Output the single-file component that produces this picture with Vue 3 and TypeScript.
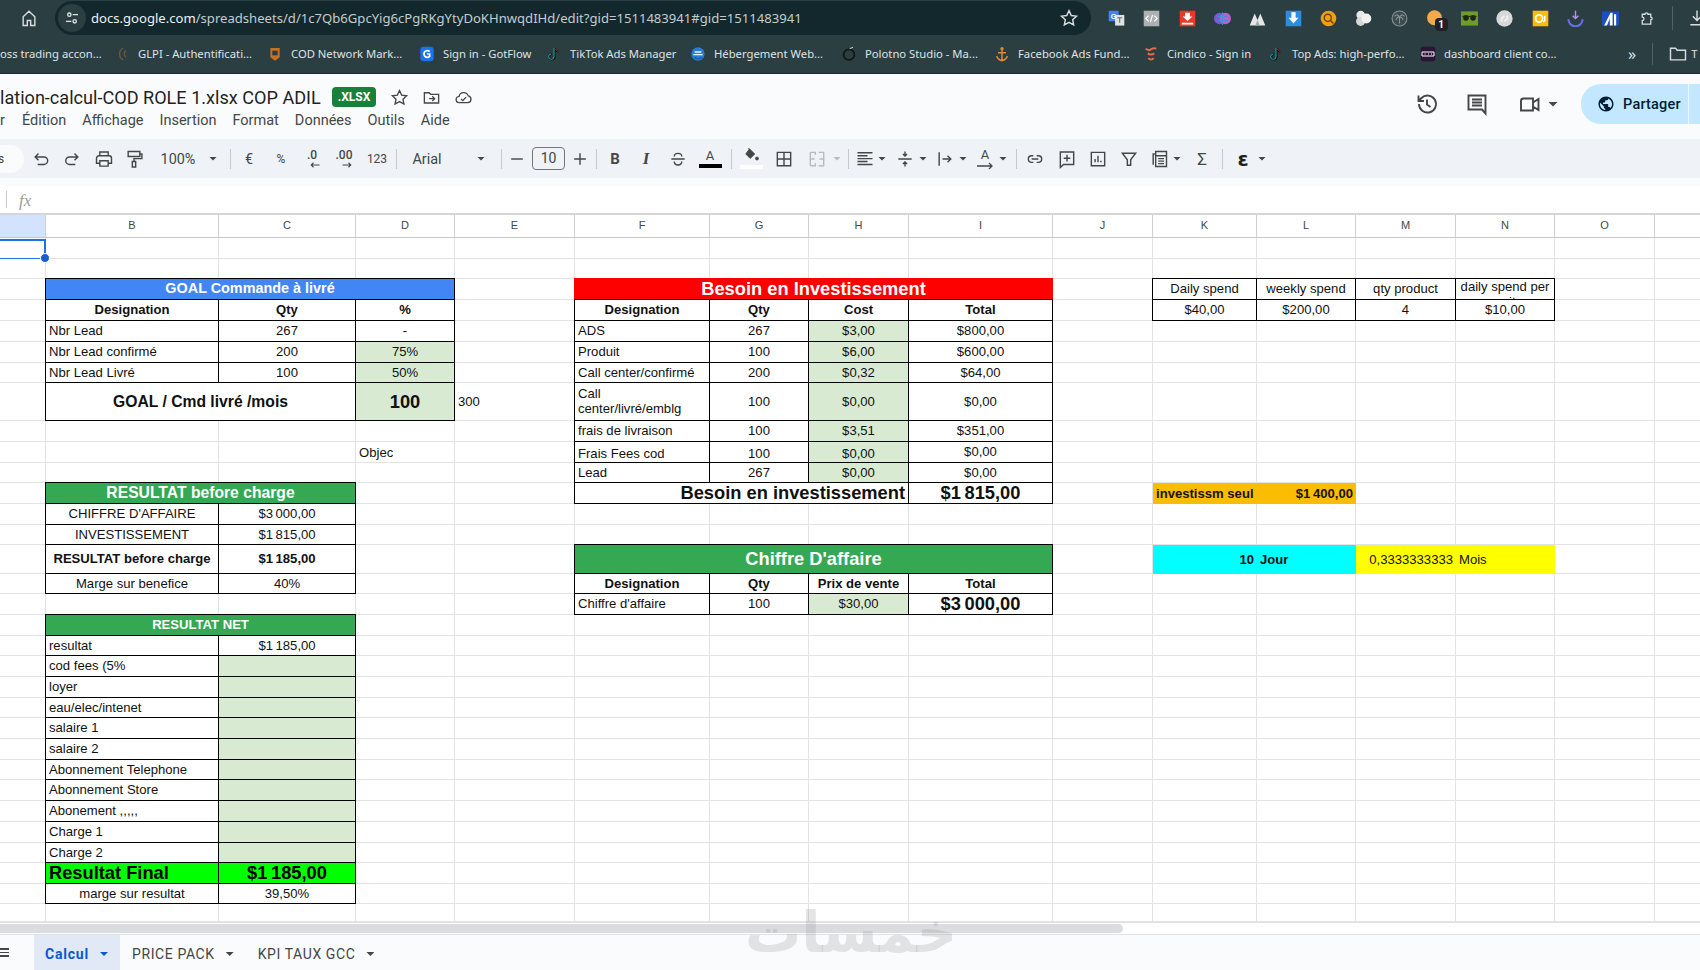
<script setup lang="ts">
import { computed } from "vue";

const colLabels = ["", "B", "C", "D", "E", "F", "G", "H", "I", "J", "K", "L", "M", "N", "O", ""];
const ROWS = 32;
const COLS = 16;

// stroke icons, 24 box
const icons: Record<string, string> = {
  home: "M5 21V10.500L12 4l7 6.500V21h-5v-6h-4v6z",
  star: "M12 3.200l2.700 5.800 6.300.8-4.600 4.300 1.200 6.200-5.600-3.100-5.600 3.100 1.200-6.200L3 9.800l6.300-.8z",
  move: "M3 6h6l2 2h10v11H3zM9 13.500h7M13 10.500l3 3-3 3",
  cloud: "M7 18.500a4 4 0 0 1-.6-8A6 6 0 0 1 18 10a4.300 4.300 0 0 1-.5 8.500zM9 14l2.200 2 4-4.500",
  history: "M4 12a8.500 8.500 0 1 0 2.500-6L3.500 9M3.500 3.500V9H9M12 7.500v5l3.500 2.500",
  comment: "M3.500 3.500h17v14h0v4l-3.500-4h-13.500zM7 7.500h10M7 10.500h10M7 13.500h10",
  video: "M3 9a2.500 2.500 0 0 1 2.500-2.500H15v12H3zM15 10.500l5.500-3.500v11l-5.500-3.500z",
  undo: "M9 5.500L5 9.500l4 4M5 9.500h10.500a4.500 4.500 0 0 1 0 9H8",
  redo: "M15 5.500l4 4-4 4M19 9.500H9a4.500 4.500 0 0 0 0 9h7",
  print: "M7 8V3.500h10V8M7 17H3v-6a3 3 0 0 1 3-3h12a3 3 0 0 1 3 3v6h-4M7 14h10v6.500H7z",
  paint: "M5 3h14v6H5zM19 6h2.500v5.500H12V15M10 15h4v6.500h-4z",
  minus: "M5 12h14",
  plus: "M12 5v14M5 12h14",
  strike: "M4 12h16M7.500 9c0-5 9-5 9 0M7.500 15c0 5.500 9 5.500 9 0",
  borders: "M4 4h16v16H4zM12 4v16M4 12h16",
  merge: "M4 4h6v3M4 20h6v-3M14 4h6v3M14 20h6v-3M4 4v16M20 4v16M3 12h6M21 12h-6",
  align: "M3 4.500h18M3 8h12M3 11.500h18M3 15h12M3 18.500h18",
  valign: "M4 12h16M12 3v5.500M9.500 6l2.500 2.500L14.500 6M12 21v-5.500M9.500 18l2.500-2.500 2.500 2.500",
  wrap: "M5 4v16M9 12h10M15 8l4 4-4 4",
  link: "M10 8H8a4 4 0 0 0 0 8h2M14 8h2a4 4 0 0 1 0 8h-2M8 12h8",
  addnote: "M4 3.500h16v15H8l-4 3.500zM12 7v8M8 11h8",
  chart: "M4 4h16v16H4zM8.500 16v-4M12 16V8M15.500 16v-2",
  filter: "M4 5h16l-6 8v6.500h-4V13z",
  funcs: "M5 19V6h2M8 3h13v18H8zM8 8h13M11 11.500h7M11 14.500h7M11 17.500h7",
};

const globe =
  "M12 2C6.480 2 2 6.480 2 12s4.480 10 10 10 10-4.480 10-10S17.520 2 12 2zm-1 17.930c-3.950-.490-7-3.850-7-7.930 0-.620.080-1.210.210-1.790L9 15v1c0 1.100.900 2 2 2v1.930zm6.900-2.540c-.260-.810-1-1.390-1.900-1.390h-1v-3c0-.550-.450-1-1-1H8v-2h2c.550 0 1-.450 1-1V7h2c1.100 0 2-.900 2-2v-.410c2.930 1.190 5 4.060 5 7.410 0 2.080-.800 3.970-2.100 5.390z";

// extension toolbar of the browser
const extensions: string[] = [
  '<rect x="1" y="1" width="14" height="15" rx="1" fill="#4285f4"/><rect x="10" y="7" width="13" height="15" fill="#dfe3e6"/><text x="4" y="12" font-size="10" font-weight="700" fill="#fff" font-family="Liberation Sans">G</text><path d="M13 11h7M16.500 11v7" stroke="#667" stroke-width="1.500"/>',
  '<rect x="1" y="1" width="22" height="22" fill="#aeb1b2"/><path d="M8 8l-4 4 4 4M16 8l4 4-4 4M13.500 7l-3 10" stroke="#fff" stroke-width="1.600" fill="none"/>',
  '<rect x="1" y="1" width="22" height="22" fill="#ea3a24"/><path d="M8.500 4h7v5H19l-7 6.500L5 9h3.500zM4 18h16v2.500H4z" fill="#fff"/>',
  '<circle cx="8" cy="12" r="8" fill="#7a58d8"/><circle cx="16" cy="12" r="8" fill="#c05ed0"/><path d="M12 3v18M5 9h5M5 15h5M14 9h5M14 15h5" stroke="#3c8fd8" stroke-width="1.500"/>',
  '<path d="M1 22L8 5l4 9 4-9 7 17z" fill="#e6e6e6"/><path d="M12 14l-3 8h6z" fill="#9aa"/>',
  '<rect x="1" y="1" width="22" height="22" fill="#2a8de0"/><path d="M9 3h6v8h4l-7 8-7-8h4z" fill="#fff"/>',
  '<circle cx="12" cy="12" r="11" fill="#f59e0b"/><circle cx="11" cy="11" r="5" fill="none" stroke="#6b4300" stroke-width="2"/><path d="M15 15l4 4" stroke="#6b4300" stroke-width="2"/>',
  '<circle cx="8" cy="7" r="6" fill="#e8e8e8"/><circle cx="8" cy="16" r="6.500" fill="#d8d8d8"/><circle cx="16" cy="12" r="7" fill="#f2f2f2"/>',
  '<circle cx="12" cy="12" r="10.500" fill="#3c4d50" stroke="#8a9194" stroke-width="1.500"/><path d="M12 10v9M5 9c3-3 5-2 7 1 2-3 4-4 7-1M7 14c1-3 3-4 5-4 2 0 4 1 5 4" stroke="#8a9194" stroke-width="1.500" fill="none"/>',
  '<circle cx="12" cy="11" r="10.500" fill="#f5a94a"/>',
  '<rect x="0" y="2" width="24" height="20" fill="#6f9b2d"/><circle cx="7" cy="11" r="4" fill="#1c2a12"/><circle cx="17" cy="11" r="4" fill="#1c2a12"/><path d="M2 9h20" stroke="#1c2a12" stroke-width="1.500"/>',
  '<circle cx="12" cy="12" r="11.500" fill="#d8d8d8"/><path d="M9 16a3 3 0 0 1 0-5l3-3M15 8a3 3 0 0 1 0 5l-3 3" stroke="#f4f4f4" stroke-width="2.500" fill="none"/>',
  '<rect x="1" y="1" width="22" height="22" fill="#fbbc04"/><circle cx="10" cy="12" r="5" fill="none" stroke="#fff" stroke-width="2.500"/><path d="M18 8v7l-2 2" stroke="#fff" stroke-width="2" fill="none"/>',
  '<path d="M2 13a10 10 0 0 0 20 0" fill="none" stroke="#6a6cf0" stroke-width="3"/><path d="M12 1v10M8 8l4 4 4-4" stroke="#b494f0" stroke-width="2" fill="none"/>',
  '<rect x="0" y="2" width="24" height="20" fill="#1b4fc0"/><path d="M3 22L12 4l3 0v18h-4V12l-4 10zM17 6h3v16h-3z" fill="#fff"/>',
  '<path d="M6 6h4a2 2 0 0 1 4 0h4v4a2 2 0 0 1 0 4v6H6v-5a2.500 2.500 0 0 0 0-5z" fill="none" stroke="#d8dddf" stroke-width="1.800"/>',
];

// bookmarks bar, w is the slot each entry takes
const bookmarks = [
  { w: 114, label: "oss trading accon...", icon: "" },
  { w: 153, label: "GLPI - Authentificati...", icon: '<path d="M14 3a10 10 0 0 0 0 18M18 7a6 6 0 0 0 0 10" stroke="#6a5a3a" stroke-width="2" fill="none"/>' },
  { w: 152, label: "COD Network Mark...", icon: '<path d="M5 3h14v14l-7 5-7-5z" fill="#c8711f"/><rect x="8" y="7" width="8" height="7" fill="#2b3e42"/>' },
  { w: 127, label: "Sign in - GotFlow", icon: '<rect x="2" y="1" width="20" height="22" rx="5" fill="#1a73f0"/><path d="M16 8.500a5 5 0 1 0 0 7V12h-4" stroke="#fff" stroke-width="2.500" fill="none"/>' },
  { w: 144, label: "TikTok Ads Manager", icon: '<path d="M13 3v13a4 4 0 1 1-4-4M13 3c1 4 3 5 6 5.500" stroke="#111" stroke-width="3" fill="none"/><path d="M12 3v13a4 4 0 1 1-4-4" stroke="#25f4ee" stroke-width="1" fill="none"/><path d="M14 4c1 3 3 4 5 4.500" stroke="#fe2c55" stroke-width="1" fill="none"/>' },
  { w: 151, label: "Hébergement Web...", icon: '<circle cx="12" cy="12" r="10" fill="#2a7ad8"/><path d="M5 13h14M7 9h10" stroke="#dff" stroke-width="2"/><path d="M18 17a8 8 0 0 1-11 0" stroke="#1b5aa8" stroke-width="2" fill="none"/>' },
  { w: 153, label: "Polotno Studio - Ma...", icon: '<circle cx="12" cy="13" r="8" fill="none" stroke="#0e1516" stroke-width="2.500"/><path d="M13 4l5-2" stroke="#d8dddf" stroke-width="1.500"/>' },
  { w: 149, label: "Facebook Ads Fund...", icon: '<circle cx="12" cy="4" r="2.500" fill="#e08a2c"/><path d="M12 6v16M6 10h12M4 15c1 4 4 6 8 7 4-1 7-3 8-7" stroke="#e08a2c" stroke-width="2.200" fill="none"/>' },
  { w: 125, label: "Cindico - Sign in", icon: '<path d="M4 4c3 3 5 3 8 1s5-2 8-1M7 11c3 2 7 2 10 0M8 18c2 3 6 3 8 0" stroke="#e8694a" stroke-width="3" fill="none"/>' },
  { w: 152, label: "Top Ads: high-perfo...", icon: '<path d="M13 3v13a4 4 0 1 1-4-4M13 3c1 4 3 5 6 5.500" stroke="#111" stroke-width="3" fill="none"/><path d="M12 3v13a4 4 0 1 1-4-4" stroke="#25f4ee" stroke-width="1" fill="none"/><path d="M14 4c1 3 3 4 5 4.500" stroke="#fe2c55" stroke-width="1" fill="none"/>' },
  { w: 200, label: "dashboard client co...", icon: '<rect x="1" y="1" width="22" height="22" rx="3" fill="#2c1338"/><path d="M3 9h18v6H3z" fill="none" stroke="#fff" stroke-width="1.500"/><path d="M7 12h1M12 12h1M17 12h1" stroke="#fff" stroke-width="2.500"/>' },
];

const menus = ["r", "Édition", "Affichage", "Insertion", "Format", "Données", "Outils", "Aide"];

type Tool = {
  kind: "pill" | "icon" | "caret" | "sep" | "text" | "box" | "dec" | "colorA" | "fill" | "rotA";
  cx: number;
  w: number;
  icon?: string;
  label?: string;
  cls?: string;
  dir?: "l" | "r";
};

const ic = (icon: string, cx: number, cls = ""): Tool => ({ kind: "icon", icon, cx, w: 20, cls });
const caret = (cx: number, cls = ""): Tool => ({ kind: "caret", cx, w: 8, cls });
const sep = (cx: number): Tool => ({ kind: "sep", cx, w: 1 });
const tx = (label: string, cx: number, w: number, cls = ""): Tool => ({ kind: "text", label, cx, w, cls });

const toolList: Tool[] = [
  { kind: "pill", cx: 12, w: 24, label: "s" },
  ic("undo", 41), ic("redo", 72), ic("print", 104), ic("paint", 134),
  tx("100%", 178, 38), caret(213), sep(230),
  tx("€", 249, 14), tx("%", 281, 14, "small"),
  { kind: "dec", cx: 312, w: 20, label: ".0", dir: "l" },
  { kind: "dec", cx: 344, w: 22, label: ".00", dir: "r" },
  tx("123", 377, 24, "small"), sep(396),
  tx("Arial", 427, 32), caret(481), sep(501),
  ic("minus", 517),
  { kind: "box", cx: 548.500, w: 33, label: "10" },
  ic("plus", 580), sep(596),
  tx("B", 615, 14, "bold"), tx("I", 646, 14, "ital"),
  ic("strike", 678),
  { kind: "colorA", cx: 710, w: 23, label: "A" },
  sep(731),
  { kind: "fill", cx: 751, w: 23 },
  ic("borders", 784), ic("merge", 817, "dim"), caret(837, "dim"), sep(848),
  ic("align", 865), caret(882), ic("valign", 905), caret(923),
  ic("wrap", 945), caret(963),
  { kind: "rotA", cx: 985, w: 18, label: "A" },
  caret(1003), sep(1016),
  ic("link", 1035), ic("addnote", 1067), ic("chart", 1098), ic("filter", 1129),
  ic("funcs", 1159), caret(1177),
  tx("Σ", 1202, 14, "sigma"), sep(1222),
  tx("ε", 1243, 14, "eps"), caret(1262),
];

// flex margins worked out from where each tool's centre should land
const tools = computed(() => {
  let end = 0;
  return toolList.map((t) => {
    const gap = t.cx - t.w / 2 - end;
    end = t.cx + t.w / 2;
    return { ...t, style: { width: `${t.w}px`, marginLeft: `${gap}px` } };
  });
});

type Cell = { r: number; c: number; text?: string; cls: string; rs?: number; cs?: number };
const N = "\u202f";
const cell = (r: number, c: number, text: string, cls = "", cs = 1): Cell => ({ r, c, text, cls, cs });

const B = 1, C = 2, D = 3, E = 4, F = 5, G = 6, H = 7, I = 8, K = 10, L = 11, M = 12, O = 13;

const cells: Cell[] = [
  // goal
  cell(2, B, "GOAL Commande à livré", "bd mid head blue", 3),
  cell(3, B, "Designation", "bd mid bold"), cell(3, C, "Qty", "bd mid bold"), cell(3, D, "%", "bd mid bold"),
  cell(4, B, "Nbr Lead", "bd"), cell(4, C, "267", "bd mid"), cell(4, D, "-", "bd mid"),
  cell(5, B, "Nbr Lead confirmé", "bd"), cell(5, C, "200", "bd mid"), cell(5, D, "75%", "bd mid input"),
  cell(6, B, "Nbr Lead Livré", "bd"), cell(6, C, "100", "bd mid"), cell(6, D, "50%", "bd mid input"),
  cell(7, B, "GOAL / Cmd livré /mois", "bd mid bold f12", 2), cell(7, D, "100", "bd mid input bold f14"),
  cell(7, E, "300"),
  cell(9, D, "Objec"),
  // resultat before charge
  cell(11, B, "RESULTAT before charge", "bd mid head green f12", 2),
  cell(12, B, "CHIFFRE D'AFFAIRE", "bd mid"), cell(12, C, `$3${N}000,00`, "bd mid"),
  cell(13, B, "INVESTISSEMENT", "bd mid"), cell(13, C, `$1${N}815,00`, "bd mid"),
  cell(14, B, "RESULTAT before charge", "bd mid bold"), cell(14, C, `$1${N}185,00`, "bd mid bold"),
  cell(15, B, "Marge sur benefice", "bd mid"), cell(15, C, "40%", "bd mid"),
  // resultat net
  cell(17, B, "RESULTAT NET", "bd mid head green f10", 2),
  cell(18, B, "resultat", "bd"), cell(18, C, `$1${N}185,00`, "bd mid"),
  ...["cod fees (5%", "loyer", "eau/elec/intenet", "salaire 1", "salaire 2", "Abonnement Telephone", "Abonnement Store", "Abonement ,,,,,", "Charge 1", "Charge 2"].flatMap((t, i) => [
    cell(19 + i, B, t, "bd"),
    cell(19 + i, C, "", "bd input"),
  ]),
  cell(29, B, "Resultat Final", "bd lime bold f14"), cell(29, C, `$1${N}185,00`, "bd mid lime bold f14"),
  cell(30, B, "marge sur resultat", "bd mid"), cell(30, C, "39,50%", "bd mid"),
  // besoin
  cell(2, F, "Besoin en Investissement", "bd mid head red f14", 4),
  cell(3, F, "Designation", "bd mid bold"), cell(3, G, "Qty", "bd mid bold"), cell(3, H, "Cost", "bd mid bold"), cell(3, I, "Total", "bd mid bold"),
  cell(4, F, "ADS", "bd"), cell(4, G, "267", "bd mid"), cell(4, H, "$3,00", "bd mid input"), cell(4, I, "$800,00", "bd mid"),
  cell(5, F, "Produit", "bd"), cell(5, G, "100", "bd mid"), cell(5, H, "$6,00", "bd mid input"), cell(5, I, "$600,00", "bd mid"),
  cell(6, F, "Call center/confirmé", "bd"), cell(6, G, "200", "bd mid"), cell(6, H, "$0,32", "bd mid input"), cell(6, I, "$64,00", "bd mid"),
  cell(7, F, "Call center/livré/emblg", "bd wrap"), cell(7, G, "100", "bd mid"), cell(7, H, "$0,00", "bd mid input"), cell(7, I, "$0,00", "bd mid"),
  cell(8, F, "frais de livraison", "bd"), cell(8, G, "100", "bd mid"), cell(8, H, "$3,51", "bd mid input"), cell(8, I, "$351,00", "bd mid"),
  cell(9, F, "Frais Fees cod", "bd low"), cell(9, G, "100", "bd mid low"), cell(9, H, "$0,00", "bd mid input low"), cell(9, I, "$0,00", "bd mid"),
  cell(10, F, "Lead", "bd"), cell(10, G, "267", "bd mid"), cell(10, H, "$0,00", "bd mid input"), cell(10, I, "$0,00", "bd mid"),
  cell(11, F, "Besoin en investissement", "bd end bold f14", 3), cell(11, I, `$1${N}815,00`, "bd mid bold f14"),
  // chiffre d'affaire
  cell(14, F, "Chiffre D'affaire", "bd mid head green f14", 4),
  cell(15, F, "Designation", "bd mid bold"), cell(15, G, "Qty", "bd mid bold"), cell(15, H, "Prix de vente", "bd mid bold"), cell(15, I, "Total", "bd mid bold"),
  cell(16, F, "Chiffre d'affaire", "bd"), cell(16, G, "100", "bd mid"), cell(16, H, "$30,00", "bd mid input"), cell(16, I, `$3${N}000,00`, "bd mid bold f14"),
  // daily spend
  cell(2, K, "Daily spend", "bd mid"), cell(2, L, "weekly spend", "bd mid"), cell(2, M, "qty product", "bd mid"), cell(2, O, "daily spend per unit", "bd mid clip"),
  cell(3, K, "$40,00", "bd mid"), cell(3, L, "$200,00", "bd mid"), cell(3, M, "4", "bd mid"), cell(3, O, "$10,00", "bd mid"),
  // side notes
  cell(11, K, "investissm seul", "orange bold"), cell(11, L, `$1${N}400,00`, "orange bold end"),
  cell(14, K, "10", "cyan bold end"), cell(14, L, "Jour", "cyan bold"),
  cell(14, M, "0,3333333333", "yellow end"), cell(14, O, "Mois", "yellow"),
];

const area = (c: Cell) => ({
  gridArea: `${c.r + 1} / ${c.c + 1} / span 1 / span ${c.cs ?? 1}`,
});
const blanks = computed(() => {
  const list: { r: number; c: number }[] = [];
  for (let r = 0; r < ROWS; r++) for (let c = 0; c < COLS; c++) list.push({ r, c });
  return list;
});

const tabs = [
  { label: "Calcul", active: true },
  { label: "PRICE PACK", active: false },
  { label: "KPI TAUX GCC", active: false },
];
</script>

<template>
  <div class="page">
    <!-- browser chrome -->
    <div class="browser">
      <div class="nav-row">
        <div class="home-slot">
          <svg class="ico light" viewBox="0 0 24 24"><path :d="icons.home" /></svg>
        </div>
        <div class="omnibox">
          <span class="tune">
            <svg viewBox="0 0 24 24">
              <circle cx="8" cy="7" r="2.500" /><path d="M13 7h8M3 17h8" /><circle cx="16" cy="17" r="2.500" />
            </svg>
          </span>
          <span class="url"><b>docs.google.com</b>/spreadsheets/d/1c7Qb6GpcYig6cPgRKgYtyDoKHnwqdIHd/edit?gid=1511483941#gid=1511483941</span>
          <svg class="ico light bm-star" viewBox="0 0 24 24"><path :d="icons.star" /></svg>
        </div>
        <div class="exts">
          <div v-for="(e, i) in extensions" :key="i" class="ext">
            <svg viewBox="0 0 24 24" v-html="e"></svg>
            <span v-if="i === 9" class="ext-badge">1</span>
          </div>
          <span class="ext-sep"></span>
          <svg class="ico light ext-dl" viewBox="0 0 24 24"><path d="M12 3v12M7 10l5 5 5-5M4 20h16" /></svg>
        </div>
      </div>
      <div class="bookmarks">
        <div v-for="b in bookmarks" :key="b.label" class="bookmark" :style="{ width: b.w + 'px' }">
          <svg v-if="b.icon" viewBox="0 0 24 24" v-html="b.icon"></svg>
          <span>{{ b.label }}</span>
        </div>
        <div class="bm-end">
          <span class="more">»</span>
          <span class="bm-sep"></span>
          <svg class="ico light" viewBox="0 0 24 24"><path d="M3 5h6l2 2.500h10V19H3z" /></svg>
          <span class="bm-t">T</span>
        </div>
      </div>
    </div>

    <!-- docs header -->
    <header class="docs-head">
      <div class="docs-left">
        <div class="title-row">
          <span class="doc-title">lation-calcul-COD ROLE 1.xlsx COP ADIL</span>
          <span class="xlsx">.XLSX</span>
          <svg class="ico title-ico" viewBox="0 0 24 24"><path :d="icons.star" /></svg>
          <svg class="ico title-ico" viewBox="0 0 24 24"><path :d="icons.move" /></svg>
          <svg class="ico title-ico" viewBox="0 0 24 24"><path :d="icons.cloud" /></svg>
        </div>
        <nav class="menu">
          <span v-for="m in menus" :key="m">{{ m }}</span>
        </nav>
      </div>
      <div class="docs-right">
        <svg class="ico big" viewBox="0 0 24 24"><path :d="icons.history" /></svg>
        <svg class="ico big" viewBox="0 0 24 24"><path :d="icons.comment" /></svg>
        <svg class="ico big" viewBox="0 0 24 24"><path :d="icons.video" /></svg>
        <i class="caret"></i>
        <div class="share">
          <div class="share-main">
            <svg viewBox="0 0 24 24"><path :d="globe" /></svg>
            <span>Partager</span>
          </div>
          <div class="share-more"></div>
        </div>
      </div>
    </header>

    <!-- toolbar -->
    <div class="toolbar">
      <template v-for="(t, i) in tools" :key="i">
        <div v-if="t.kind === 'pill'" class="t-pill" :style="t.style">{{ t.label }}</div>
        <svg v-else-if="t.kind === 'icon'" class="ico tool" :class="t.cls" :style="t.style" viewBox="0 0 24 24"><path :d="icons[t.icon!]" /></svg>
        <i v-else-if="t.kind === 'caret'" class="caret small-caret" :class="t.cls" :style="t.style"></i>
        <span v-else-if="t.kind === 'sep'" class="t-sep" :style="t.style"></span>
        <span v-else-if="t.kind === 'text'" class="t-text" :class="t.cls" :style="t.style">{{ t.label }}</span>
        <span v-else-if="t.kind === 'box'" class="t-box" :style="t.style">{{ t.label }}</span>
        <span v-else-if="t.kind === 'dec'" class="t-dec" :style="t.style">
          <span>{{ t.label }}</span>
          <svg viewBox="0 0 16 8"><path :d="t.dir === 'l' ? 'M14 4H3M6 1L3 4l3 3' : 'M2 4h11M10 1l3 3-3 3'" /></svg>
        </span>
        <span v-else-if="t.kind === 'colorA'" class="t-color" :style="t.style">
          <span>{{ t.label }}</span><i class="bar black"></i>
        </span>
        <span v-else-if="t.kind === 'fill'" class="t-color" :style="t.style">
          <svg class="bucket" viewBox="0 0 24 20">
            <path d="M10 1l7 7-6 6-6-6zM10 1L8 0" />
            <circle cx="20" cy="14" r="2" />
          </svg>
          <i class="bar white"></i>
        </span>
        <span v-else class="t-color rot" :style="t.style">
          <span>{{ t.label }}</span>
          <svg viewBox="0 0 18 8"><path d="M1 4h15M13 1l3 3-3 3" /></svg>
        </span>
      </template>
    </div>

    <!-- formula bar -->
    <div class="formula">
      <span class="f-sep"></span>
      <span class="fx">fx</span>
    </div>

    <!-- sheet -->
    <div class="col-head">
      <div v-for="(l, i) in colLabels" :key="i" class="col-cell" :class="{ selected: i === 0 }">{{ l }}</div>
    </div>
    <div class="grid">
      <div
        v-for="b in blanks"
        :key="`${b.r}-${b.c}`"
        class="blank"
        :style="{ gridArea: `${b.r + 1} / ${b.c + 1}` }"
      ></div>
      <div class="active-cell"><i class="handle"></i></div>
      <div
        v-for="(c, i) in cells"
        :key="i"
        class="cell"
        :class="c.cls"
        :style="area(c)"
      >
        <span>{{ c.text }}</span>
      </div>
    </div>

    <div class="scroll-row"><div class="thumb"></div></div>

    <!-- sheet tabs -->
    <div class="tabs">
      <div class="all-sheets"><i></i><i></i><i></i></div>
      <div v-for="t in tabs" :key="t.label" class="tab" :class="{ active: t.active }">
        <span>{{ t.label }}</span>
        <i class="caret"></i>
      </div>
    </div>

    <div class="watermark">خمسات</div>
  </div>
</template>

<style>
html,
body {
  margin: 0;
  background: #fff;
  overflow: hidden;
}
</style>

<style scoped>
.page {
  --cols: 46px 173px 137px 99px 120px 135px 99px 100px 144px 100px 104px 99px 100px 99px 100px 46px;
  position: relative;
  width: 1700px;
  height: 970px;
  overflow: hidden;
  display: flex;
  flex-direction: column;
  font-family: Roboto, "Liberation Sans", sans-serif;
  color: #444746;
  background: #f9fbfd;
}

.ico {
  flex: none;
  fill: none;
  stroke: #444746;
  stroke-width: 1.7;
  width: 20px;
  height: 20px;
}
.ico.light {
  stroke: #d9dfe0;
}
.caret {
  display: block;
  flex: none;
  width: 10px;
  height: 5px;
  background: #444746;
  clip-path: polygon(0 0, 100% 0, 50% 100%);
}
.small-caret {
  height: 4px;
}
.caret.dim {
  background: #b8bcc0;
}

/* browser */
.browser {
  flex: none;
  height: 74px;
  background: #2b3e42;
  border-bottom: 1px solid #1c2a2d;
  box-sizing: border-box;
  color: #dfe4e6;
}
.nav-row {
  display: flex;
  align-items: flex-start;
  height: 36px;
}
.home-slot {
  flex: none;
  width: 55px;
  height: 36px;
  display: flex;
  align-items: center;
  justify-content: center;
  padding-left: 3px;
  box-sizing: border-box;
}
.omnibox {
  flex: none;
  width: 1036px;
  height: 34px;
  box-sizing: border-box;
  border-radius: 17px;
  background: #13282d;
  display: flex;
  align-items: center;
  margin-top: 1px;
}
.tune {
  flex: none;
  width: 28px;
  height: 28px;
  margin-left: 3px;
  border-radius: 50%;
  background: #2b3e42;
  display: flex;
  align-items: center;
  justify-content: center;
}
.tune svg {
  width: 16px;
  height: 16px;
  fill: none;
  stroke: #e0e4e6;
  stroke-width: 2;
}
.url {
  margin-left: 5px;
  font-family: "Noto Sans", sans-serif;
  font-size: 13.100px;
  color: #c4cccf;
  white-space: nowrap;
}
.url b {
  font-weight: 400;
  color: #eef1f2;
}
.bm-star {
  margin-left: auto;
  margin-right: 12px;
}
.exts {
  flex: none;
  display: flex;
  align-items: center;
  height: 36px;
  margin-left: 8px;
}
.ext {
  flex: none;
  position: relative;
  width: 35.300px;
  display: flex;
  justify-content: center;
}
.ext svg {
  width: 17px;
  height: 17px;
}
.ext-badge {
  position: absolute;
  left: 18px;
  top: 8px;
  width: 13px;
  height: 13px;
  border-radius: 4px;
  background: #202124;
  color: #fff;
  font-size: 10px;
  font-weight: 700;
  text-align: center;
  line-height: 13px;
}
.ext-sep {
  flex: none;
  width: 1px;
  height: 24px;
  background: #506266;
  margin-left: 8px;
}
.ext-dl {
  margin-left: 14px;
}
.bookmarks {
  display: flex;
  align-items: center;
  height: 35px;
  font-family: "Noto Sans", sans-serif;
  font-size: 11.250px;
  white-space: nowrap;
  overflow: hidden;
}
.bookmark {
  flex: none;
  display: flex;
  align-items: center;
  gap: 8px;
  box-sizing: border-box;
}
.bookmark svg {
  width: 16px;
  height: 16px;
  flex: none;
}
.bm-end {
  margin-left: auto;
  display: flex;
  align-items: center;
  flex: none;
  width: 72px;
}
.more {
  font-size: 16px;
  margin-right: 16px;
}
.bm-sep {
  flex: none;
  width: 1px;
  height: 22px;
  background: #506266;
  margin-right: 15px;
}
.bm-t {
  margin-left: 3px;
}

/* docs header */
.docs-head {
  flex: none;
  height: 65px;
  display: flex;
  justify-content: space-between;
  box-sizing: border-box;
  padding-top: 12px;
}
.title-row {
  display: flex;
  align-items: center;
  height: 22px;
}
.doc-title {
  font-size: 18.100px;
  color: #1f1f1f;
  white-space: nowrap;
  width: 332px;
}
.xlsx {
  width: 44px;
  height: 20px;
  line-height: 20px;
  text-align: center;
  background: #188038;
  color: #fff;
  border-radius: 4px;
  font-size: 12px;
  font-weight: 700;
}
.title-ico {
  width: 19px;
  height: 19px;
  margin-left: 13px;
}
.title-ico:first-of-type {
  margin-left: 14px;
}
.menu {
  display: flex;
  gap: 16px;
  height: 20px;
  line-height: 20px;
  margin-top: 3px;
  font-size: 14.500px;
}
.menu span:first-child {
  width: 6px;
}
.docs-right {
  flex: none;
  display: flex;
  align-items: center;
  height: 40px;
  margin-top: -2px;
}
.ico.big {
  width: 24px;
  height: 24px;
  stroke-width: 1.900;
  margin-right: 26px;
}
.ico.big:nth-of-type(2) {
  margin-right: 29px;
}
.ico.big:nth-of-type(3) {
  margin-right: 6px;
}
.docs-right > .caret {
  margin-right: 23px;
}
.share {
  width: 119px;
  height: 40px;
  display: flex;
  border-radius: 20px 0 0 20px;
  overflow: hidden;
  background: #c2e7ff;
}
.share-main {
  width: 108px;
  display: flex;
  align-items: center;
  padding-left: 16px;
  gap: 8px;
  box-sizing: border-box;
  border-right: 1px solid #f0f8ff;
  font-size: 14.500px;
  font-weight: 500;
  color: #001d35;
  letter-spacing: 0.2px;
}
.share-main svg {
  width: 18px;
  height: 18px;
  fill: #001d35;
  flex: none;
}

/* toolbar */
.toolbar {
  flex: none;
  height: 39px;
  background: #eff3f8;
  display: flex;
  align-items: center;
  font-size: 14.400px;
}
.t-pill {
  flex: none;
  height: 28px;
  background: #f9fbfd;
  border-radius: 0 14px 14px 0;
  line-height: 28px;
  font-size: 12px;
  text-indent: -2px;
  overflow: hidden;
}
.t-sep {
  flex: none;
  height: 20px;
  background: #c7c9cc;
}
.t-text {
  flex: none;
  text-align: center;
  white-space: nowrap;
  padding-top: 1px;
}
.t-text.small {
  font-size: 12px;
}
.t-text.bold {
  font-weight: 700;
  font-size: 15px;
}
.t-text.ital {
  font-style: italic;
  font-family: "Liberation Serif", serif;
  font-size: 17px;
  font-weight: 700;
}
.t-text.sigma {
  font-size: 17px;
}
.t-text.eps {
  font-family: "DejaVu Sans", sans-serif;
  font-weight: 700;
  font-size: 20px;
  line-height: 20px;
  color: #1f1f1f;
}
.t-box {
  flex: none;
  height: 23px;
  box-sizing: border-box;
  border: 1px solid #747775;
  border-radius: 4px;
  text-align: center;
  line-height: 21px;
  font-size: 14px;
}
.t-dec {
  flex: none;
  display: flex;
  flex-direction: column;
  align-items: center;
  font-size: 12px;
  font-weight: 500;
  line-height: 11px;
}
.t-dec svg {
  width: 12px;
  height: 6px;
  margin: 1px 0 0 6px;
  fill: none;
  stroke: #444746;
  stroke-width: 1.500;
}
.t-color {
  flex: none;
  display: flex;
  flex-direction: column;
  align-items: center;
  font-size: 13px;
  line-height: 14px;
}
.bar {
  display: block;
  width: 100%;
  height: 4px;
  margin-top: 1px;
}
.bar.black {
  background: #000;
}
.bar.white {
  background: #fff;
  margin-top: 2px;
}
.bucket {
  width: 18px;
  height: 15px;
  fill: #444746;
  stroke: #444746;
}
.rot svg {
  width: 18px;
  height: 8px;
  fill: none;
  stroke: #444746;
  stroke-width: 1.300;
}
.tool.dim {
  stroke: #b8bcc0;
}
.tool {
  height: 20px;
}

/* formula bar */
.formula {
  flex: none;
  margin-top: 8px;
  height: 29px;
  background: #fff;
  border-bottom: 2px solid #d5d6d7;
  box-sizing: border-box;
  display: flex;
  align-items: center;
}
.f-sep {
  flex: none;
  width: 1px;
  height: 17px;
  background: #c7c9cc;
  margin-left: 6px;
}
.fx {
  margin-left: 12px;
  padding-top: 2px;
  font-family: "Liberation Serif", serif;
  font-style: italic;
  font-size: 17px;
  color: #9a9c9e;
}

/* grid */
.col-head {
  flex: none;
  display: grid;
  grid-template-columns: var(--cols);
  height: 23px;
  background: #fff;
  border-bottom: 1px solid #c7c7c7;
  box-sizing: border-box;
}
.col-cell {
  border-right: 1px solid #d0d1d2;
  text-align: center;
  font-family: "Liberation Sans", Arial, sans-serif;
  font-size: 11px;
  line-height: 21px;
  color: #444746;
}
.col-cell.selected {
  background: #d3e3fd;
}
.grid {
  flex: none;
  display: grid;
  grid-template-columns: var(--cols);
  grid-template-rows: 21px 20px 21px 21px 21px 21px 20px 38px 21px 21px 20px 21px 21px 20px 29px 20px 21px 21px 20px 21px 21px 20px 21px 21px 20px 21px 21px 21px 20px 21px 20px 18px;
  background: #fff;
  font-family: "Liberation Sans", Arial, sans-serif;
  font-size: 13.100px;
  color: #111;
}
.blank {
  border-right: 1px solid #e3e3e3;
  border-bottom: 1px solid #e3e3e3;
}
.active-cell {
  grid-area: 1 / 1;
  position: relative;
  z-index: 3;
  margin-top: 1px;
  border: 2px solid #1a73e8;
  border-left: none;
  border-bottom-width: 1px;
}
.handle {
  position: absolute;
  right: -6px;
  bottom: -5px;
  width: 8px;
  height: 8px;
  border-radius: 50%;
  background: #1a5fc8;
  border: 1px solid #fff;
}
.cell {
  position: relative;
  z-index: 2;
  display: flex;
  align-items: center;
  padding: 0 3px 1px;
  white-space: nowrap;
  min-width: 0;
  line-height: 15px;
}
.cell.bd {
  margin: -1px 0 0 -1px;
  border: 1px solid #000;
  background: #fff;
  box-sizing: border-box;
}
.mid {
  justify-content: center;
  text-align: center;
}
.end {
  justify-content: flex-end;
}
.bold {
  font-weight: 700;
}
.cell.bd.input {
  background: #d9ead3;
}
.head {
  font-weight: 700;
  color: #fff;
  font-size: 14.400px;
}
.cell.bd.blue {
  background: #4285f4;
}
.cell.bd.green {
  background: #34a853;
}
.cell.bd.red {
  background: #ff0000;
  border-top-color: #ff0000;
  border-left-color: #ff0000;
  border-right-color: #ff0000;
}
.cell.bd.lime {
  background: #00ff00;
  color: #000;
}
.orange {
  background: #fbbc04;
  color: #1a1200;
}
.cyan {
  background: #00ffff;
}
.yellow {
  background: #ffff00;
}
.head.f10 {
  font-size: 13.100px;
}
.head.f12,
.f12 {
  font-size: 15.700px;
}
.head.f14,
.f14 {
  font-size: 18.300px;
}
.wrap {
  white-space: normal;
}
.low span {
  padding-top: 4px;
}
.clip {
  white-space: normal;
  align-items: flex-start;
  overflow: hidden;
}

.scroll-row {
  flex: none;
  height: 13px;
  background: #fff;
  border-top: 1px solid #e1e1e1;
  border-bottom: 1px solid #e1e1e1;
  box-sizing: border-box;
  padding-top: 1px;
}
.thumb {
  width: 1123px;
  height: 9px;
  border-radius: 0 5px 5px 0;
  background: #dadce0;
}

/* tabs */
.tabs {
  flex: 1;
  display: flex;
  align-items: stretch;
  font-size: 14px;
  font-weight: 400;
  letter-spacing: 0.6px;
}
.all-sheets {
  flex: none;
  width: 34px;
  display: flex;
  flex-direction: column;
  justify-content: center;
  gap: 2px;
}
.all-sheets i {
  display: block;
  width: 9px;
  height: 1.500px;
  background: #444746;
}
.tab {
  display: flex;
  align-items: center;
  gap: 11px;
  padding: 3px 12px 0 12px;
}
.tab .caret {
  width: 8px;
  height: 4px;
}
.tab.active {
  background: #e1e9f7;
  color: #0b57d0;
  font-weight: 700;
  letter-spacing: 0.8px;
  width: 86px;
  box-sizing: border-box;
  padding-left: 11px;
}
.tab.active .caret {
  background: #0b57d0;
}

.watermark {
  position: absolute;
  left: 745px;
  top: 898px;
  width: 212px;
  text-align: center;
  font-family: "DejaVu Sans", sans-serif;
  font-size: 56px;
  line-height: 70px;
  font-weight: 700;
  color: rgba(150, 150, 150, 0.25);
  pointer-events: none;
}
</style>
